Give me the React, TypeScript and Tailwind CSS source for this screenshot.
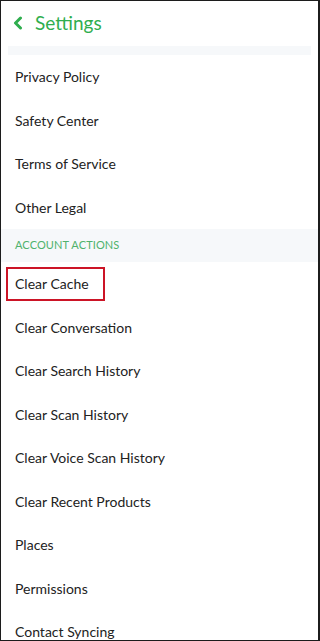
export default function App() {
  const topItems = ["Privacy Policy", "Safety Center", "Terms of Service", "Other Legal"];
  const accountItems = [
    "Clear Cache",
    "Clear Conversation",
    "Clear Search History",
    "Clear Scan History",
    "Clear Voice Scan History",
    "Clear Recent Products",
    "Places",
    "Permissions",
    "Contact Syncing",
  ];

  return (
    <div
      className="w-[320px] h-[641px] overflow-hidden bg-white border-t border-l border-b border-r-2 border-[#1c1c1c]"
      style={{ fontFamily: "Lato, 'Open Sans', sans-serif" }}
    >
      {/* Header */}
      <header className="h-[45px] flex items-center pl-[12px] gap-[12px]">
        <svg width="10" height="14" viewBox="0 0 10 14" className="mt-[-1px]">
          <path d="M7.5 2 L2.5 7 L7.5 12" fill="none" stroke="#2fae4e" strokeWidth="3" strokeLinecap="round" strokeLinejoin="round" />
        </svg>
        <h1 className="text-[19px] text-[#2fae4e]">Settings</h1>
      </header>
      <div className="h-[9px] mx-[7px] bg-[#f6f8fa]" />

      {/* Legal */}
      {topItems.map((item) => (
        <div key={item} className="h-[43.5px] flex items-center pl-[14px] text-[14px] text-[#222]">
          {item}
        </div>
      ))}

      {/* Account Actions */}
      <div className="h-[33px] bg-[#f6f8fa] flex items-center pl-[14px] text-[11px] text-[#4fb26c] tracking-[0.1px]">
        ACCOUNT ACTIONS
      </div>
      {accountItems.map((item, idx) => (
        <div key={item} className="relative h-[43.5px] flex items-center pl-[14px] text-[14px] text-[#222]">
          {idx === 0 && (
            <div className="absolute left-[5px] top-[5px] w-[99px] h-[34px] border-[2.5px] border-[#cc1426]" />
          )}
          {item}
        </div>
      ))}
    </div>
  );
}
